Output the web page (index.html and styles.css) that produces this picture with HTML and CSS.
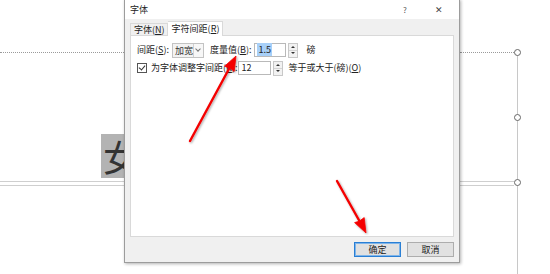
FILE: index.html
```html
<!DOCTYPE html>
<html lang="zh-CN">
<head>
    <meta charset="UTF-8">
    <title>字体</title>
    <link rel="stylesheet" href="styles.css">
</head>
<body>

<div class="doc">
    <div class="frame-line dotted left-top"></div>
    <div class="frame-line double left-bottom"></div>
    <div class="glyph">女</div>

    <div class="frame-line dotted right-top"></div>
    <div class="frame-line double right-bottom"></div>
    <div class="frame-side"></div>
    <span class="handle h1"></span>
    <span class="handle h2"></span>
    <span class="handle h3"></span>

    <div class="dialog">
        <div class="titlebar">
            <span class="title">字体</span>
            <span class="help">?</span>
            <span class="close">✕</span>
        </div>
        <div class="dialog-body">
            <div class="tabs">
                <div class="tab">字体(<u>N</u>)</div>
                <div class="tab active">字符间距(<u>R</u>)</div>
            </div>
            <div class="panel">
                <div class="row">
                    <span class="label">间距(<u>S</u>):</span>
                    <div class="combo">
                        <span class="combo-text">加宽</span>
                        <span class="combo-arrow"></span>
                    </div>
                    <span class="label measure">度量值(<u>B</u>):</span>
                    <div class="field w-measure"><span class="selected">1.5</span></div>
                    <div class="spin"><span class="up"></span><span class="down"></span></div>
                    <span class="label unit">磅</span>
                </div>
                <div class="row">
                    <span class="check"></span>
                    <span class="label kern">为字体调整字间距(<u>K</u>):</span>
                    <div class="field w-kern">12</div>
                    <div class="spin"><span class="up"></span><span class="down"></span></div>
                    <span class="label after">等于或大于(磅)(<u>O</u>)</span>
                </div>
            </div>
            <div class="footer">
                <button class="btn primary">确定</button>
                <button class="btn">取消</button>
            </div>
        </div>
    </div>

    <svg class="arrows" width="550" height="274" viewBox="0 0 550 274">
        <defs>
            <filter id="shade" x="-20%" y="-20%" width="140%" height="140%">
                <feDropShadow dx="1" dy="1" stdDeviation="1" flood-color="#000" flood-opacity="0.35"/>
            </filter>
        </defs>
        <g filter="url(#shade)" fill="#f40000" stroke="#f40000">
            <line x1="190" y1="141" x2="230" y2="67" stroke-width="2.4" stroke-linecap="round"/>
            <polygon points="236,56 234.2,71.5 230.5,68.6 224.6,66.2" stroke-width="0.8" stroke-linejoin="round"/>
            <line x1="337" y1="181" x2="360" y2="222" stroke-width="2.4" stroke-linecap="round"/>
            <polygon points="366,233 354.6,222.6 359.2,221.2 364.2,217.6" stroke-width="0.8" stroke-linejoin="round"/>
        </g>
    </svg>
</div>

</body>
</html>
```

FILE: styles.css
```css
html, body {
    margin: 0;
    padding: 0;
    background-color: #fff;
}
body {
    font-family: "Noto Sans CJK SC", "Liberation Sans", sans-serif;
    font-size: 9px;
    color: #333;
}
.doc {
    position: relative;
    width: 550px;
    height: 274px;
    overflow: hidden;
}

/* document canvas behind the dialog */
.frame-line {
    position: absolute;
}
.dotted {
    height: 0;
    border-top: 1px dotted #9a9a9a;
}
.double {
    height: 3px;
    border-top: 1px solid #cfcfcf;
    border-bottom: 1px solid #cfcfcf;
}
.left-top {
    left: 0;
    top: 52px;
    width: 124px;
}
.left-bottom {
    left: 0;
    top: 181px;
    width: 124px;
}
.right-top {
    left: 460px;
    top: 52px;
    width: 54px;
}
.right-bottom {
    left: 460px;
    top: 181px;
    width: 54px;
}
.frame-side {
    position: absolute;
    left: 517px;
    top: 52px;
    width: 1px;
    height: 222px;
    background-color: #c8c8c8;
}
.handle {
    position: absolute;
    left: 514px;
    width: 5px;
    height: 5px;
    border: 1.5px solid #666;
    border-radius: 50%;
    background-color: #fff;
}
.h1 { top: 49px; }
.h2 { top: 114px; }
.h3 { top: 179px; }
.glyph {
    position: absolute;
    left: 101px;
    top: 134px;
    width: 26px;
    height: 44px;
    background-color: #b3b3b3;
    font-size: 36px;
    line-height: 44px;
    color: #333;
    text-indent: 2px;
}

/* dialog window */
.dialog {
    position: absolute;
    left: 124px;
    top: -1px;
    width: 334px;
    height: 262px;
    border: 1px solid #9c9c9c;
    background-color: #f0f0f0;
    box-shadow: 1px 1px 3px rgba(0, 0, 0, 0.3);
    display: flex;
    flex-direction: column;
}
.titlebar {
    height: 19px;
    background-color: #fff;
    display: flex;
    align-items: center;
    padding: 0 0 0 5px;
}
.title {
    flex: 1;
    color: #222;
}
.help {
    width: 10px;
    color: #555;
    font-size: 8px;
    margin-right: 22px;
}
.close {
    width: 14px;
    color: #444;
    font-size: 9px;
    margin-right: 10px;
}
.dialog-body {
    flex: 1;
    display: flex;
    flex-direction: column;
    padding: 3px 5px 0 5px;
}
.tabs {
    display: flex;
    align-items: flex-end;
    height: 13px;
    position: relative;
    z-index: 1;
}
.tab {
    height: 11px;
    line-height: 11px;
    padding: 0 2px 0 3px;
    white-space: nowrap;
    border: 1px solid #d9d9d9;
    border-bottom: none;
    background-color: #f0f0f0;
    color: #222;
}
.tab.active {
    height: 14px;
    line-height: 13px;
    padding: 0 3px 0 4px;
    background-color: #fff;
    border-left: none;
    margin-bottom: -1px;
}
.panel {
    box-sizing: border-box;
    height: 202px;
    border: 1px solid #d9d9d9;
    background-color: #fff;
    padding: 7px 0 0 6px;
}
.row {
    display: flex;
    align-items: center;
    height: 14px;
    margin-bottom: 4px;
}
.label {
    white-space: nowrap;
    color: #222;
    line-height: 14px;
}
.combo {
    display: flex;
    width: 30px;
    height: 13px;
    margin-left: 3px;
    border: 1px solid #c3c3c3;
    background-color: #f3f3f3;
}
.combo-text {
    flex: 1;
    padding-left: 2px;
    line-height: 13px;
    white-space: nowrap;
}
.combo-arrow {
    width: 9px;
    border-left: 1px solid #d0d0d0;
    background-color: #f7f7f7;
    position: relative;
}
.combo-arrow::after {
    content: "";
    position: absolute;
    left: 2px;
    top: 3px;
    width: 3px;
    height: 3px;
    border-right: 1px solid #777;
    border-bottom: 1px solid #777;
    transform: rotate(45deg);
}
.measure {
    margin-left: 6px;
}
.field {
    height: 12px;
    line-height: 12px;
    border: 1px solid #b9b9b9;
    background-color: #fff;
    padding-left: 2px;
    color: #222;
}
.w-measure {
    width: 28px;
    margin-left: 3px;
}
.selected {
    background-color: #a8d0f8;
    padding: 0 1px;
}
.spin {
    display: flex;
    flex-direction: column;
    width: 8px;
    height: 13px;
    margin-left: 2px;
    border: 1px solid #c8c8c8;
    background-color: #f2f2f2;
}
.spin span {
    flex: 1;
    position: relative;
}
.spin .up {
    border-bottom: 1px solid #d4d4d4;
}
.spin .up::after,
.spin .down::after {
    content: "";
    position: absolute;
    left: 2px;
    top: 2px;
    border-left: 2px solid transparent;
    border-right: 2px solid transparent;
}
.spin .up::after {
    border-bottom: 2px solid #333;
}
.spin .down::after {
    top: 1px;
    border-top: 2px solid #333;
}
.unit {
    margin-left: 8px;
}
.check {
    width: 8px;
    height: 8px;
    border: 1px solid #555;
    position: relative;
}
.check::after {
    content: "";
    position: absolute;
    left: 2px;
    top: 0;
    width: 3px;
    height: 5px;
    border-right: 1px solid #333;
    border-bottom: 1px solid #333;
    transform: rotate(40deg);
}
.kern {
    margin-left: 4px;
}
.w-kern {
    width: 29px;
    margin-left: 1px;
}
.after {
    margin-left: 5px;
}
.footer {
    display: flex;
    justify-content: flex-end;
    gap: 6px;
    padding-top: 5px;
}
.btn {
    width: 47px;
    height: 15px;
    padding: 0;
    font-family: inherit;
    font-size: 9px;
    line-height: 12px;
    color: #222;
    background-color: #e1e1e1;
    border: 1px solid #adadad;
}
.btn.primary {
    border: 1px solid #2a7fd4;
    box-shadow: inset 0 0 0 1px #7fb5ea;
}

/* red pointers drawn over the screenshot */
.arrows {
    position: absolute;
    left: 0;
    top: 0;
    pointer-events: none;
}
```
